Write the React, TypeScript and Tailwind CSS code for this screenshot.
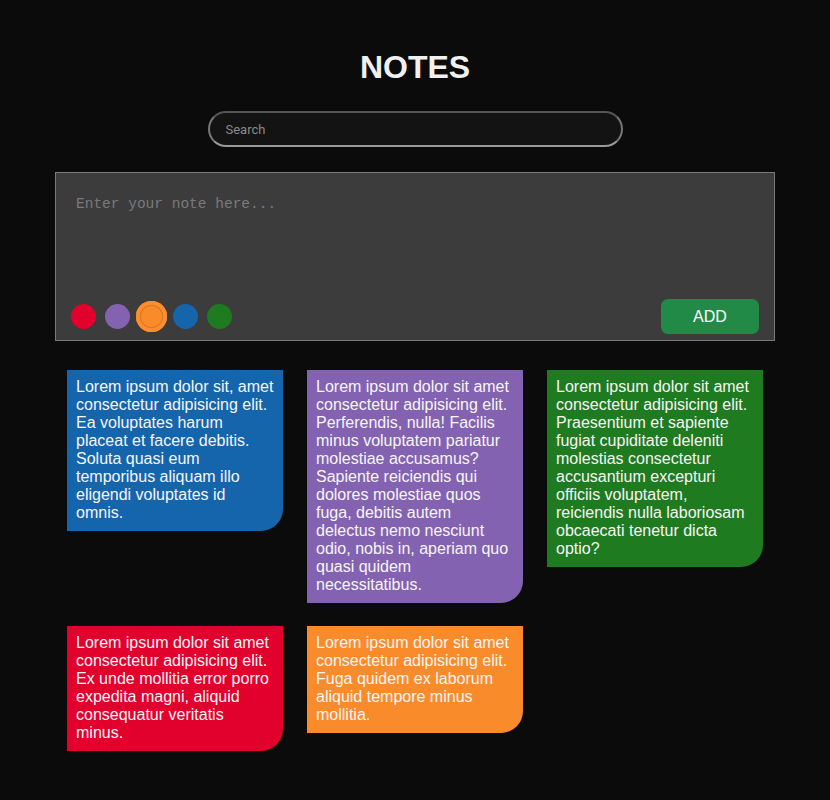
import React from "react";

const notes = [
  {
    color: "bg-[#1565ad]",
    text: "Lorem ipsum dolor sit, amet consectetur adipisicing elit. Ea voluptates harum placeat et facere debitis. Soluta quasi eum temporibus aliquam illo eligendi voluptates id omnis.",
  },
  {
    color: "bg-[#8462b2]",
    text: "Lorem ipsum dolor sit amet consectetur adipisicing elit. Perferendis, nulla! Facilis minus voluptatem pariatur molestiae accusamus? Sapiente reiciendis qui dolores molestiae quos fuga, debitis autem delectus nemo nesciunt odio, nobis in, aperiam quo quasi quidem necessitatibus.",
  },
  {
    color: "bg-[#1f7b1f]",
    text: "Lorem ipsum dolor sit amet consectetur adipisicing elit. Praesentium et sapiente fugiat cupiditate deleniti molestias consectetur accusantium excepturi officiis voluptatem, reiciendis nulla laboriosam obcaecati tenetur dicta optio?",
  },
  {
    color: "bg-[#e2002d]",
    text: "Lorem ipsum dolor sit amet consectetur adipisicing elit. Ex unde mollitia error porro expedita magni, aliquid consequatur veritatis minus.",
  },
  {
    color: "bg-[#fa8b2b]",
    text: "Lorem ipsum dolor sit amet consectetur adipisicing elit. Fuga quidem ex laborum aliquid tempore minus mollitia.",
  },
];

export default function App() {
  return (
    <div
      className="min-h-[800px] w-full bg-[#0b0b0b] flex flex-col items-center pt-[49px]"
      style={{ fontFamily: '"Liberation Sans", Arial, sans-serif' }}
    >
      <h1 className="text-[32px] font-bold leading-[37px] text-[#f0f0f0]">NOTES</h1>

      <input
        type="text"
        placeholder="Search"
        className="mt-[25px] w-[415px] h-[36px] rounded-full bg-[#131313] border-2 border-t-[#555555] border-x-[#777777] border-b-[#9a9a9a] pl-4 text-[13px] text-[#ddd] placeholder:text-[#8a8a8a] outline-none"
        style={{ fontFamily: 'Roboto, "Liberation Sans", sans-serif' }}
      />

      <div className="mt-[25px] w-[720px] h-[169px] bg-[#3c3c3c] border border-[#7a7a7a] flex flex-col">
        <textarea
          placeholder="Enter your note here..."
          className="flex-1 resize-none bg-transparent outline-none pt-[21px] pl-[20px] text-[14.5px] text-[#ddd] placeholder:text-[#7a7a7a]"
          style={{ fontFamily: '"Liberation Mono", "DejaVu Sans Mono", monospace' }}
        />
        <div className="flex items-center justify-between pl-[15px] pr-[15px] pb-[6px]">
          <div className="flex items-center gap-[9px]">
            <span className="w-[25px] h-[25px] rounded-full bg-[#e2002d]" />
            <span className="w-[25px] h-[25px] rounded-full bg-[#8462b2]" />
            <span className="w-[25px] h-[25px] rounded-full bg-[#fa8b2b] scale-[1.24] shadow-[inset_0_0_0_3px_#fc8e2e,inset_0_0_0_4px_#dd7a26]" />
            <span className="w-[25px] h-[25px] rounded-full bg-[#1565ad]" />
            <span className="w-[25px] h-[25px] rounded-full bg-[#1f7b1f]" />
          </div>
          <button className="w-[98px] h-[35px] rounded-[7px] bg-[#218a46] text-white text-[16px]">
            ADD
          </button>
        </div>
      </div>

      <div className="mt-[29px] w-[696px] grid grid-cols-3 gap-x-6 gap-y-[23px] items-start pb-10">
        {notes.map((n, i) => (
          <div
            key={i}
            className={`${n.color} pt-2 pb-[9px] pl-[9px] pr-[9px] rounded-br-[22px] text-[16px] leading-[18px] text-[#f6f6f6]`}
          >
            {n.text}
          </div>
        ))}
      </div>
    </div>
  );
}
